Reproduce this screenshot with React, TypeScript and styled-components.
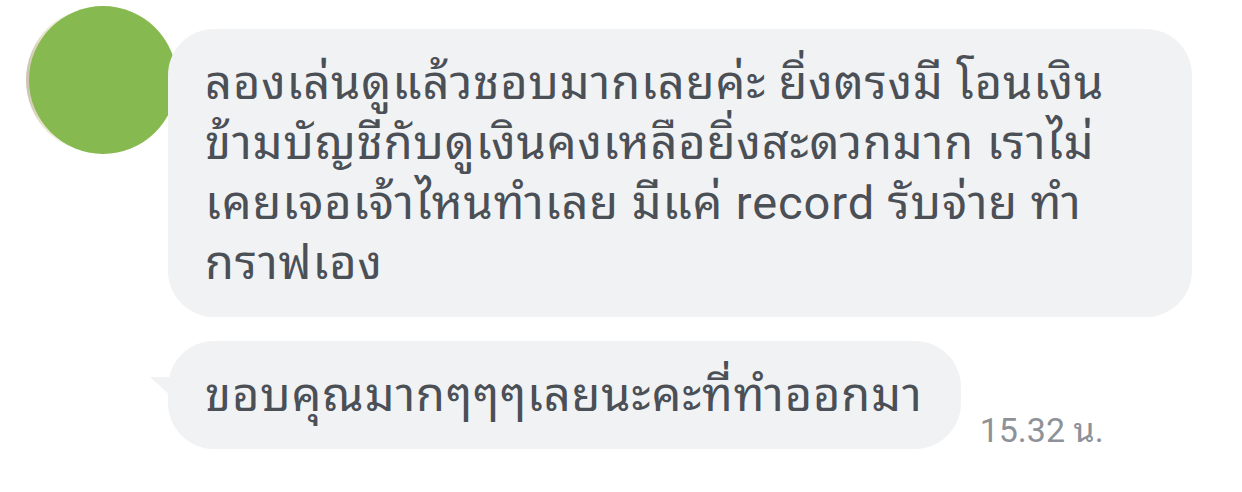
import React from 'react';
import styled, { createGlobalStyle } from 'styled-components';

const GlobalStyle = createGlobalStyle`
  html, body {
    margin: 0;
    padding: 0;
    background: #ffffff;
  }
  body {
    font-family: Roboto, "Noto Sans Thai Looped", "Noto Sans Thai UI", Loma, Garuda, "Noto Sans Thai", "Noto Sans", sans-serif;
  }
`;

const Page = styled.div`
  width: 1242px;
  height: 492px;
  display: flex;
  align-items: flex-start;
  padding: 6px 0 0 29px;
  box-sizing: border-box;
  overflow: hidden;
`;

const AvatarWrap = styled.div`
  position: relative;
  width: 148px;
  height: 148px;
  flex: none;
  margin-left: -3px;
`;

// photo peeking from under the green circle
const AvatarPhoto = styled.div`
  position: absolute;
  inset: 0;
  border-radius: 50%;
  background: linear-gradient(90deg, #c9c2ae 0%, #e9e0c8 10%, #ffffff 30%);
`;

const AvatarDot = styled.div`
  position: absolute;
  top: 0;
  left: 3px;
  width: 148px;
  height: 148px;
  border-radius: 50%;
  background: #86b950;
`;

const Messages = styled.div`
  display: flex;
  flex-direction: column;
  align-items: flex-start;
  gap: 24px;
  margin-top: 23px;
  margin-left: -6px;
`;

const Row = styled.div`
  display: flex;
  align-items: flex-end;
  gap: 19px;
`;

const Bubble = styled.div<{ $tail?: boolean; $width?: number }>`
  position: relative;
  box-sizing: border-box;
  width: ${(p) => (p.$width ? `${p.$width}px` : 'auto')};
  padding: 24px 38px 24px 37px;
  background: #f1f2f4;
  border-radius: 46px;
  color: #4b4f56;
  font-size: 47px;
  line-height: 60px;
  letter-spacing: 0.9px;
  white-space: nowrap;

  ${(p) =>
    p.$tail &&
    `
    &::before {
      content: '';
      position: absolute;
      left: -18px;
      top: 36px;
      width: 24px;
      height: 22px;
      background: #f1f2f4;
      clip-path: polygon(0 0, 100% 0, 100% 100%);
    }
  `}
`;

const Time = styled.span`
  font-size: 34px;
  line-height: 34px;
  color: #8d9299;
  margin-bottom: 2px;
  white-space: nowrap;
`;

export default function App() {
  return (
    <>
      <GlobalStyle />
      <Page>
        <AvatarWrap>
          <AvatarPhoto />
          <AvatarDot />
        </AvatarWrap>
        <Messages>
          <Bubble $width={1024}>
            ลองเล่นดูแล้วชอบมากเลยค่ะ ยิ่งตรงมี โอนเงิน
            <br />
            ข้ามบัญชีกับดูเงินคงเหลือยิ่งสะดวกมาก เราไม่
            <br />
            เคยเจอเจ้าไหนทำเลย มีแค่ record รับจ่าย ทำ
            <br />
            กราฟเอง
          </Bubble>
          <Row>
            <Bubble $tail>ขอบคุณมากๆๆๆเลยนะคะที่ทำออกมา</Bubble>
            <Time>15.32 น.</Time>
          </Row>
        </Messages>
      </Page>
    </>
  );
}
